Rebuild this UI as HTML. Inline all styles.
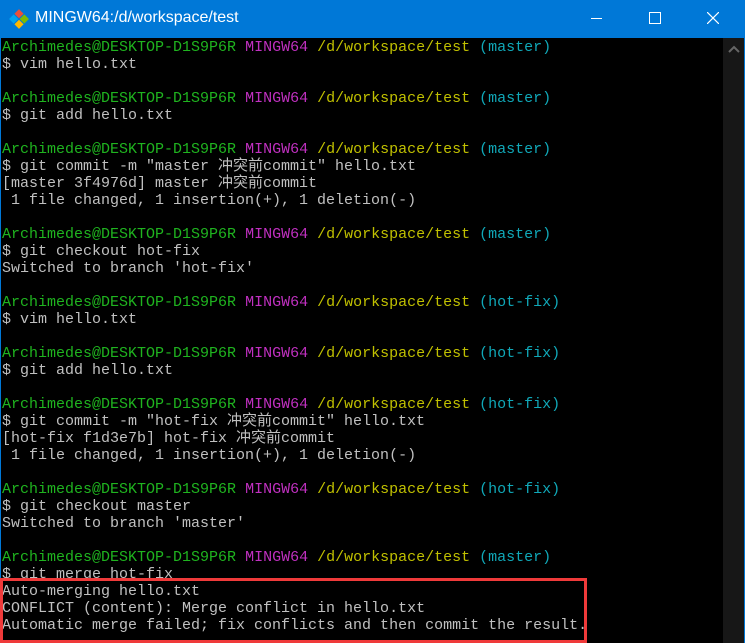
<!DOCTYPE html><html><head><meta charset="utf-8"><style>
body{margin:0;width:745px;height:643px;overflow:hidden;background:#000;position:relative;font-family:"Liberation Sans",sans-serif}
#tb{position:absolute;left:0;top:0;width:745px;height:38px;background:#0078d7;color:#fff}
#tb .t{position:absolute;left:35px;top:9px;font-size:16px}
#term{position:absolute;left:2px;top:39px;font-family:"Liberation Mono","Noto Sans CJK SC",monospace;font-size:15px;line-height:17px;color:#c0c0c0;white-space:pre}
.g{color:#1fb41f}.m{color:#c030c0}.y{color:#c0c000}.c{color:#10a8b8}
#sb{position:absolute;right:1px;top:38px;width:21px;height:605px;background:#171717}
#box{position:absolute;left:0;top:578px;width:581px;height:59px;border:3px solid #ef3a3a}
.side{position:absolute;top:0;width:1px;height:643px;background:#0078d7}
</style></head><body>
<div id="tb">
<svg style="position:absolute;left:9px;top:9px" width="20" height="20" viewBox="0 0 20 20"><g transform="rotate(45 10 10)"><rect x="3" y="3" width="6.5" height="6.5" fill="#e94f3a"/><rect x="10.5" y="3" width="6.5" height="6.5" fill="#7fba00"/><rect x="3" y="10.5" width="6.5" height="6.5" fill="#00a4ef"/><rect x="10.5" y="10.5" width="6.5" height="6.5" fill="#ffb900"/></g></svg>
<div class="t">MINGW64:/d/workspace/test</div>
<div style="position:absolute;left:591px;top:18px;width:11px;height:1px;background:#fff"></div>
<div style="position:absolute;left:649px;top:12px;width:10px;height:10px;border:1px solid #fff"></div>
<svg style="position:absolute;left:707px;top:12px" width="12" height="12"><path d="M0 0L12 12M12 0L0 12" stroke="#fff" stroke-width="1.2"/></svg>
</div>
<div class="side" style="left:0"></div><div class="side" style="right:0"></div>
<div id="sb"><svg style="position:absolute;left:5px;top:7px" width="12" height="8"><path d="M1 7L6 2L11 7" stroke="#666" stroke-width="2" fill="none"/></svg></div>
<div id="term"><span class="g">Archimedes@DESKTOP-D1S9P6R</span> <span class="m">MINGW64</span> <span class="y">/d/workspace/test</span> <span class="c">(master)</span>
$ vim hello.txt

<span class="g">Archimedes@DESKTOP-D1S9P6R</span> <span class="m">MINGW64</span> <span class="y">/d/workspace/test</span> <span class="c">(master)</span>
$ git add hello.txt

<span class="g">Archimedes@DESKTOP-D1S9P6R</span> <span class="m">MINGW64</span> <span class="y">/d/workspace/test</span> <span class="c">(master)</span>
$ git commit -m "master 冲突前commit" hello.txt
[master 3f4976d] master 冲突前commit
 1 file changed, 1 insertion(+), 1 deletion(-)

<span class="g">Archimedes@DESKTOP-D1S9P6R</span> <span class="m">MINGW64</span> <span class="y">/d/workspace/test</span> <span class="c">(master)</span>
$ git checkout hot-fix
Switched to branch 'hot-fix'

<span class="g">Archimedes@DESKTOP-D1S9P6R</span> <span class="m">MINGW64</span> <span class="y">/d/workspace/test</span> <span class="c">(hot-fix)</span>
$ vim hello.txt

<span class="g">Archimedes@DESKTOP-D1S9P6R</span> <span class="m">MINGW64</span> <span class="y">/d/workspace/test</span> <span class="c">(hot-fix)</span>
$ git add hello.txt

<span class="g">Archimedes@DESKTOP-D1S9P6R</span> <span class="m">MINGW64</span> <span class="y">/d/workspace/test</span> <span class="c">(hot-fix)</span>
$ git commit -m "hot-fix 冲突前commit" hello.txt
[hot-fix f1d3e7b] hot-fix 冲突前commit
 1 file changed, 1 insertion(+), 1 deletion(-)

<span class="g">Archimedes@DESKTOP-D1S9P6R</span> <span class="m">MINGW64</span> <span class="y">/d/workspace/test</span> <span class="c">(hot-fix)</span>
$ git checkout master
Switched to branch 'master'

<span class="g">Archimedes@DESKTOP-D1S9P6R</span> <span class="m">MINGW64</span> <span class="y">/d/workspace/test</span> <span class="c">(master)</span>
$ git merge hot-fix
Auto-merging hello.txt
CONFLICT (content): Merge conflict in hello.txt
Automatic merge failed; fix conflicts and then commit the result.</div>
<div id="box"></div>
</body></html>
